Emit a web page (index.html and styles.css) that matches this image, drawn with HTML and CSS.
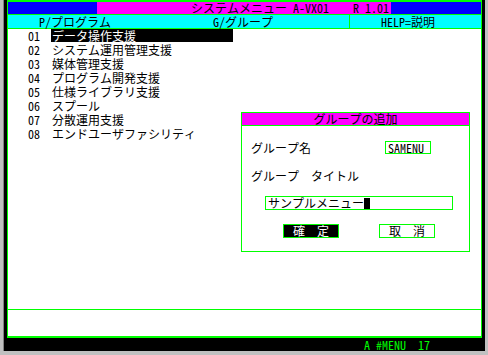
FILE: index.html
```html
<!DOCTYPE html>
<html lang="ja">
<head>
  <meta charset="UTF-8" />
  <title>システムメニュー</title>
  <link rel="stylesheet" href="styles.css">
</head>
<body>
  <div class="screen">
    <div class="frame">
      <div class="titlebar">
        <div class="title-side"></div>
        <div class="title-main">システムメニュー A-VX01    R 1.01</div>
        <div class="title-side right"></div>
      </div>
      <div class="keybar">
        <div class="key key-p">P/プログラム</div>
        <div class="key key-g">G/グループ</div>
        <div class="key key-help">HELP=説明</div>
      </div>
      <div class="work">
        <ul class="menu">
          <li><span class="num">01</span><span class="label selected">データ操作支援</span></li>
          <li><span class="num">02</span><span class="label">システム運用管理支援</span></li>
          <li><span class="num">03</span><span class="label">媒体管理支援</span></li>
          <li><span class="num">04</span><span class="label">プログラム開発支援</span></li>
          <li><span class="num">05</span><span class="label">仕様ライブラリ支援</span></li>
          <li><span class="num">06</span><span class="label">スプール</span></li>
          <li><span class="num">07</span><span class="label">分散運用支援</span></li>
          <li><span class="num">08</span><span class="label">エンドユーザファシリティ</span></li>
        </ul>

        <div class="dialog">
          <div class="dialog-title">グループの追加</div>
          <div class="dialog-row">
            <span class="dialog-label">グループ名</span>
            <span class="field-box">SAMENU</span>
          </div>
          <div class="dialog-row">
            <span class="dialog-label">グループ　タイトル</span>
          </div>
          <div class="input-row">
            <div class="input-box">サンプルメニュー<span class="cursor"></span></div>
          </div>
          <div class="button-row">
            <div class="btn btn-ok">確　定</div>
            <div class="btn btn-cancel">取　消</div>
          </div>
        </div>
      </div>
      <div class="message"></div>
    </div>
    <div class="status">A #MENU  17</div>
  </div>
</body>
</html>
```

FILE: styles.css
```css
body {
  margin: 0;
  background: #c0c0c0;
  font-family: "Noto Sans Mono CJK JP", "Noto Sans CJK JP", "DejaVu Sans Mono", monospace;
  font-size: 12px;
  line-height: 12px;
  color: #000;
}

.screen {
  margin-left: 3px;
  width: 476px;
  height: 351px;
  padding-left: 3px;
  padding-right: 1px;
  background: #000;
  border-left: 1px solid #808080;
  border-right: 1px solid #000;
}

.frame {
  width: 473px;
  border: 1px solid #00ff00;
  border-top-width: 2px;
  border-bottom-width: 2px;
  background: #fff;
}

.titlebar {
  display: flex;
  height: 12px;
  border-bottom: 1px solid #00ff00;
}

.title-side {
  width: 89px;
  background: #0000ff;
}

.title-side.right {
  width: 90px;
}

.title-main {
  width: 294px;
  background: #ff00ff;
  padding-left: 94px;
  box-sizing: border-box;
  white-space: pre;
}

.keybar {
  display: flex;
  height: 13px;
  line-height: 13px;
  background: #00ffff;
  border-bottom: 1px solid #00ff00;
}

.key {
  white-space: pre;
  box-sizing: border-box;
}

.key-p {
  width: 205px;
  padding-left: 31px;
}

.key-g {
  width: 137px;
  border-right: 1px solid #00ff00;
}

.key-help {
  padding-left: 31px;
}

.work {
  position: relative;
  height: 280px;
  border-bottom: 1px solid #00ff00;
}

.menu {
  list-style: none;
  margin: 0;
  padding: 0;
}

.menu li {
  display: flex;
  height: 14px;
  line-height: 14px;
}

.num {
  width: 23px;
  padding-left: 20px;
}

.label {
  width: 181px;
  padding-left: 1px;
}

.label.selected {
  background: #000;
  color: #fff;
  height: 13px;
  line-height: 13px;
}

.dialog {
  position: absolute;
  left: 233px;
  top: 83px;
  width: 227px;
  height: 138px;
  border: 1px solid #00ff00;
  background: #fff;
}

.dialog-title {
  height: 12px;
  line-height: 12px;
  background: #ff00ff;
  text-align: center;
  border-bottom: 1px solid #00ff00;
}

.dialog-row {
  display: flex;
  align-items: center;
  height: 13px;
  line-height: 13px;
  margin-top: 15px;
  padding-left: 9px;
}

.dialog-label {
  width: 134px;
  white-space: pre;
}

.field-box {
  width: 42px;
  height: 11px;
  line-height: 11px;
  border: 1px solid #00ff00;
  padding-left: 2px;
}

.input-row {
  margin-top: 14px;
  padding-left: 23px;
}

.input-box {
  display: flex;
  align-items: center;
  width: 184px;
  height: 12px;
  line-height: 12px;
  border: 1px solid #00ff00;
  padding-left: 2px;
}

.cursor {
  display: inline-block;
  width: 6px;
  height: 11px;
  margin-top: 1px;
  background: #000;
}

.button-row {
  display: flex;
  gap: 40px;
  margin-top: 14px;
  padding-left: 41px;
}

.btn {
  width: 54px;
  height: 12px;
  line-height: 12px;
  border: 1px solid #00ff00;
  text-align: center;
  white-space: pre;
}

.btn-ok {
  background: #000;
  color: #fff;
}

.btn-cancel {
  background: #fff;
}

.message {
  height: 26px;
}

.status {
  height: 13px;
  line-height: 13px;
  padding-left: 357px;
  color: #00ff00;
  white-space: pre;
}
```
